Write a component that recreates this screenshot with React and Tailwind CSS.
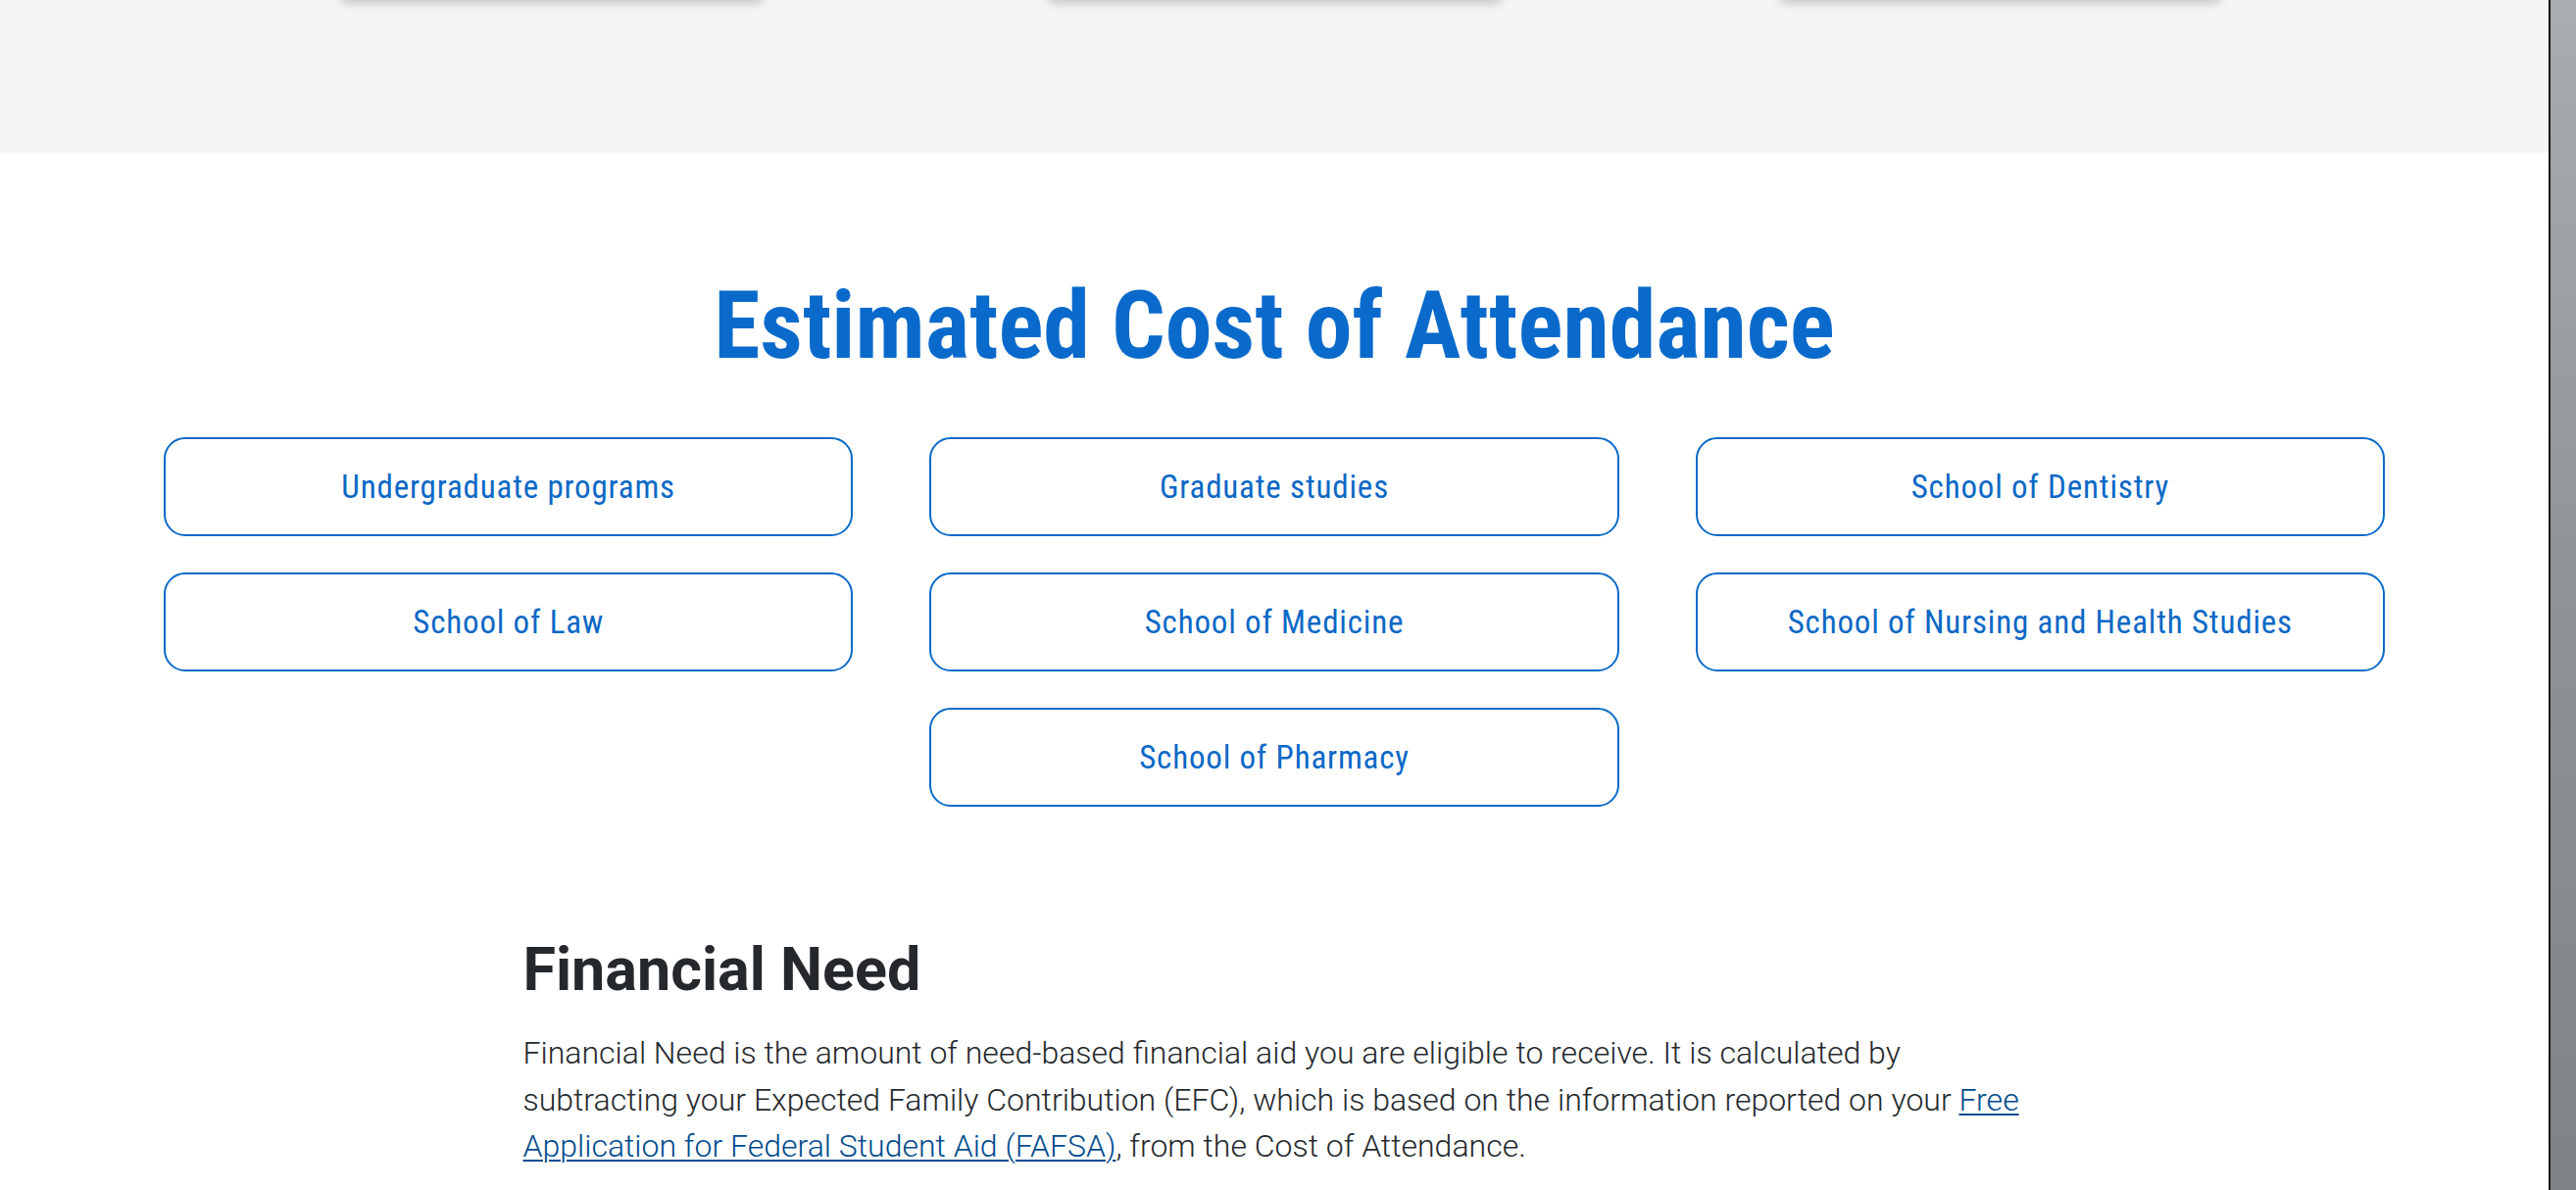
import React from 'react';

const condensed = '"Roboto Condensed", "Liberation Sans Narrow", "DejaVu Sans Condensed", sans-serif';

const programs = [
  { label: 'Undergraduate programs' },
  { label: 'Graduate studies' },
  { label: 'School of Dentistry' },
  { label: 'School of Law' },
  { label: 'School of Medicine' },
  { label: 'School of Nursing and Health Studies' },
  { label: 'School of Pharmacy', center: true },
];

const ProgramButton = ({ label, center }) => (
  <a
    href="#"
    className={`flex h-[101px] items-center justify-center rounded-[22px] border-2 border-[#0a6ac8] bg-white text-[33px] tracking-[0.025em] text-[#0b68c6] ${
      center ? 'col-start-2' : ''
    }`}
    style={{ fontFamily: condensed }}
  >
    {label}
  </a>
);

export default function App() {
  return (
    <div className="flex h-[1214px] w-[2628px] overflow-hidden bg-[#a5a9ae]">
      <div className="w-[2602px] shrink-0 border-r-2 border-[#111] bg-white">
        {/* Gray band with cards from the section above */}
        <div className="flex h-[156px] bg-[#f5f5f5]">
          <div className="ml-[347px] -mt-[30px] h-[30px] w-[432px] rounded-b-lg bg-[#f5f5f5] shadow-[0_4px_10px_rgba(0,0,0,0.18)]" />
          <div className="ml-[290px] -mt-[30px] h-[30px] w-[464px] rounded-b-lg bg-[#f5f5f5] shadow-[0_4px_10px_rgba(0,0,0,0.18)]" />
          <div className="ml-[282px] -mt-[30px] h-[30px] w-[451px] rounded-b-lg bg-[#f5f5f5] shadow-[0_4px_10px_rgba(0,0,0,0.18)]" />
        </div>

        {/* Estimated Cost of Attendance */}
        <section className="pt-[118px]">
          <h1
            className="text-center text-[96px] font-bold leading-[117px] text-[#0a6acb]"
            style={{ fontFamily: condensed }}
          >
            Estimated Cost of Attendance
          </h1>
          <div className="mx-auto mt-[55px] grid w-[2266px] grid-cols-3 gap-x-[78px] gap-y-[37px]">
            {programs.map((p) => (
              <ProgramButton key={p.label} label={p.label} center={p.center} />
            ))}
          </div>
        </section>

        {/* Financial Need */}
        <section
          className="mx-auto mt-[130px] w-[1533px] text-[#25292d]"
          style={{ fontFamily: 'Roboto, "Liberation Sans", sans-serif' }}
        >
          <h2 className="text-[61px] font-bold leading-[72px]">Financial Need</h2>
          <p className="mt-[26px] text-[32px] font-light leading-[47.5px]">
            Financial Need is the amount of need-based financial aid you are eligible to receive. It is calculated by
            subtracting your Expected Family Contribution (EFC), which is based on the information reported on your{' '}
            <a href="#" className="text-[#004b8d] underline decoration-2 underline-offset-[3px]">
              Free Application for Federal Student Aid (FAFSA)
            </a>
            , from the Cost of Attendance.
          </p>
        </section>
      </div>
      <div className="flex-1 bg-gradient-to-b from-[#a9adb2] via-[#8f9398] to-[#7f8387]" />
    </div>
  );
}
